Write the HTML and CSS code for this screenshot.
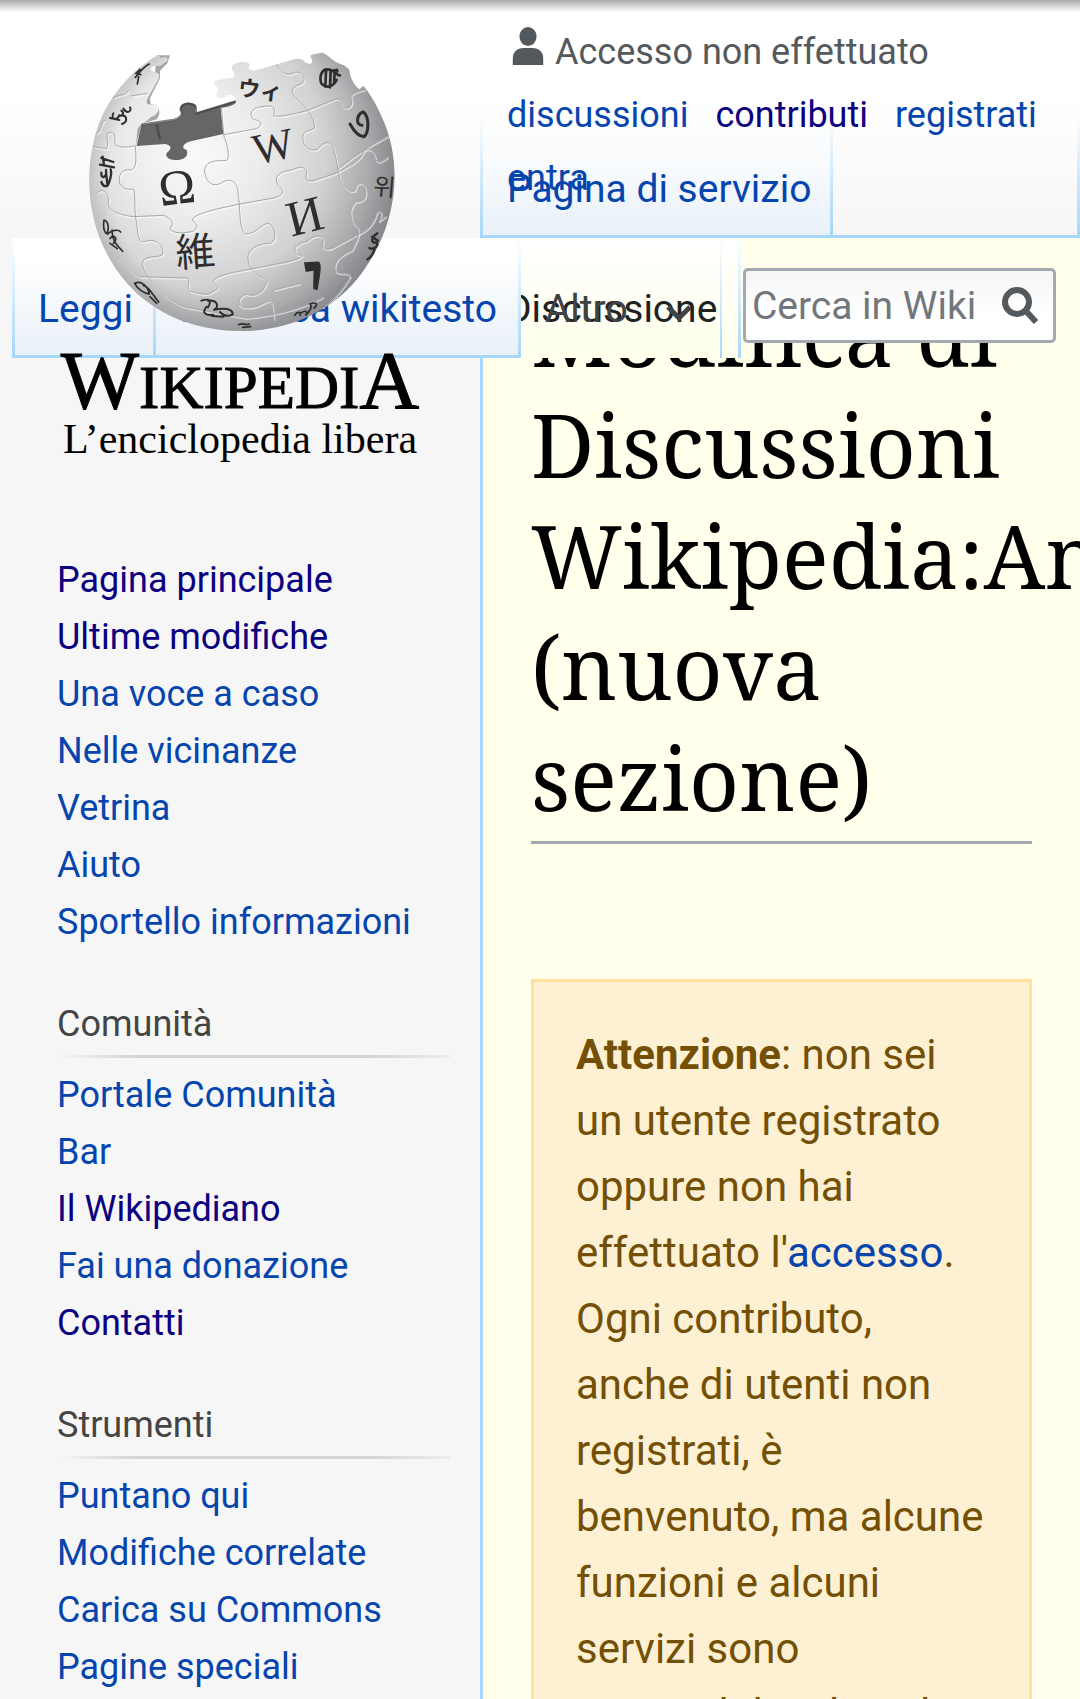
FILE: index.html
```html
<!DOCTYPE html>
<html lang="it">
<head>
<meta charset="utf-8">
<meta name="viewport" content="width=device-width, initial-scale=1">
<title>Modifica di Discussioni Wikipedia (nuova sezione)</title>
<link rel="stylesheet" href="styles.css">
</head>
<body>
<div class="page">
  <div class="band"></div>

  <main class="content">
    <h1 class="title">Modifica di Discussioni Wikipedia:Amministratori (nuova sezione)</h1>
    <div class="notice"><b>Attenzione</b>: non sei un utente registrato oppure non hai effettuato l'<a href="#">accesso</a>. Ogni contributo, anche di utenti non registrati, è benvenuto, ma alcune funzioni e alcuni servizi sono accessibili solo agli utenti registrati.</div>
  </main>

  <header class="head">
    <nav class="spaces" aria-label="Namespace">
      <a class="tab" href="#">Pagina di servizio</a>
    </nav>
    <ul class="personal">
      <li class="anon">
        <svg class="user" viewBox="0 0 32 40" aria-hidden="true"><ellipse cx="16" cy="10" rx="9" ry="10"/><path d="M0 40v-7c0-7 5-11 11-11h10c6 0 11 4 11 11v7z"/></svg>
        Accesso non effettuato
      </li>
      <li><a href="#">discussioni</a></li>
      <li><a class="visited" href="#">contributi</a></li>
      <li><a href="#">registrati</a></li>
      <li><a href="#">entra</a></li>
    </ul>
    <a class="selected" href="#">Discussione</a>
    <div class="tools">
      <nav class="views" aria-label="Visite">
        <a class="tab first" href="#">Leggi</a>
        <a class="tab" href="#">Modifica wikitesto</a>
      </nav>
      <button class="more" type="button">Altro
        <svg class="chevron" viewBox="0 0 26 16" aria-hidden="true"><path d="M2 2l11 11L24 2"/></svg>
      </button>
      <form class="search">
        <input class="field" type="search" placeholder="Cerca in Wiki" aria-label="Cerca in Wikipedia">
        <button class="go" type="submit" aria-label="Cerca">
          <svg class="lens" viewBox="0 0 36 37" aria-hidden="true"><circle cx="15" cy="15" r="12"/><path d="M23 23l11 12"/></svg>
        </button>
      </form>
    </div>
  </header>

  <aside class="side">
    <a class="logo" href="#" aria-label="Pagina principale">
      <svg class="globe" viewBox="0 0 1080 960" aria-hidden="true">
        <defs>
          <radialGradient id="ball" gradientUnits="userSpaceOnUse" cx="400" cy="370" r="660">
            <stop offset="0" stop-color="#fafafa"/><stop offset=".3" stop-color="#ececec"/>
            <stop offset=".6" stop-color="#d2d2d3"/><stop offset=".8" stop-color="#a9aaac"/><stop offset="1" stop-color="#77787b"/>
          </radialGradient>
          <radialGradient id="rim" gradientUnits="userSpaceOnUse" cx="545" cy="442" r="460">
            <stop offset=".86" stop-color="#8a8c90" stop-opacity="0"/><stop offset="1" stop-color="#85878a" stop-opacity=".3"/>
          </radialGradient>
          <path id="shape" d="M290 78C240 105 150 180 110 300C70 430 80 590 170 720C260 850 400 903 545 903C690 903 840 840 925 700C1010 570 1030 400 965 260C945 215 925 185 910 168L898 178C880 165 870 140 868 120C855 102 838 104 822 92C808 82 795 68 785 68C765 74 748 70 752 82C765 102 748 106 735 96C725 84 715 84 695 90L590 120C566 125 562 115 570 102C560 94 530 92 516 108C510 122 530 130 522 142L464 152C456 164 476 170 474 180C460 206 476 208 494 202C510 188 530 196 524 214L402 246C400 232 420 226 400 218C378 210 354 226 362 240C376 252 360 268 340 270L244 288L228 346L232 300C236 284 260 276 272 262C300 252 302 228 284 222C262 226 256 222 262 206L296 146C302 124 290 130 274 122C268 112 280 106 300 108L322 92C326 76 310 84 300 84C302 74 294 76 290 78Z"/>
          <clipPath id="clip"><use href="#shape"/></clipPath>
          <g id="seams">
            <path d="M100 350L140 356C150 330 130 312 150 306C172 308 162 330 166 344C180 356 210 350 230 347M226 350C228 380 232 412 214 420C184 414 172 440 180 462C196 486 216 474 222 480C228 500 220 540 230 580C234 620 236 640 256 634C290 622 312 650 308 672C300 684 264 676 250 690C240 716 264 744 320 800M112 488C124 472 144 486 146 508C138 536 160 552 220 560L310 556C336 566 344 578 330 594C332 612 376 610 398 604C416 592 414 586 396 570C400 552 470 536 540 522L640 504C672 496 674 484 656 468C636 440 660 424 696 420C716 408 740 408 740 430C734 450 742 454 760 452L826 430C870 406 900 392 910 366C924 346 944 364 946 388C952 402 966 394 984 380"/>
            <path d="M484 232L492 320C502 340 512 390 498 392C460 390 432 396 434 426C440 462 460 470 482 460C510 440 534 454 534 490C542 540 536 596 556 612C590 612 602 580 626 580C648 592 652 632 630 640C590 640 560 660 564 690C572 736 610 736 620 758C606 794 580 800 556 792C532 804 530 826 552 832C590 836 606 820 624 812C642 814 636 840 642 868"/>
            <path d="M490 314L590 296C612 284 600 270 580 268C564 248 580 232 606 230C640 222 650 236 640 256C650 264 700 252 740 242L830 206C846 210 840 224 856 234C874 234 880 214 872 200C874 186 900 184 914 178M650 104C662 128 684 140 706 126C732 126 742 150 722 162C694 170 690 184 704 200C734 230 764 260 764 294C748 304 728 300 728 324C730 352 748 364 772 358C790 334 812 330 820 352C830 390 834 420 840 450C858 484 880 490 886 478C888 456 912 452 916 478C922 504 908 516 890 514C866 530 870 560 880 580C908 600 896 620 876 660C830 680 820 700 826 724C850 740 862 720 870 740C850 776 830 800 790 834"/>
            <path d="M458 784C482 776 474 770 458 754C468 738 500 730 578 716L680 696C720 686 740 676 712 674C694 656 710 640 740 634C764 612 790 612 790 636C784 652 790 660 812 656L880 620C912 606 940 590 950 548C962 536 970 550 956 574L978 558M172 680C196 710 216 730 240 740L382 744C396 760 370 780 398 786C424 790 440 800 458 784M320 800C340 816 360 830 380 832L560 864C640 856 720 840 790 800M160 204C180 190 196 200 206 180M212 198L262 190M110 310C130 300 116 280 136 270M830 420C900 360 960 330 1000 310M640 780L720 760"/>
          </g>
        </defs>
        <path fill="#a4a8ac" d="M290 76L330 76L322 100L300 122L300 145L270 205L272 222C298 220 306 250 290 268L250 280L238 345L215 345L230 280L262 205L284 140Z"/>
        <use href="#shape" fill="url(#ball)"/>
        <use href="#shape" fill="url(#rim)"/>
        <path fill="#666" d="M244 286L340 272C362 268 374 254 360 238C360 220 384 214 402 222C416 232 398 244 408 248L528 212C532 218 520 228 482 234L490 312L392 334C366 342 364 356 380 360C388 382 366 392 342 390C318 388 312 372 326 364C338 350 328 344 314 342L230 348Z"/>
        <path fill="none" stroke="#3e3e3e" stroke-width="7" opacity=".65" d="M244 284L340 270C358 266 372 254 362 240C362 222 384 216 404 226C414 236 402 242 410 250L526 214M290 284L300 328"/>
        <g clip-path="url(#clip)" fill="none">
          <use href="#seams" x="3" y="4" stroke="#fff" stroke-width="4" stroke-opacity=".6"/>
          <use href="#seams" stroke="#a9a9ab" stroke-width="3"/>
        </g>
        <g class="glyphs">
          <text x="302" y="528" font-size="148" transform="rotate(-7 302 528)">Ω</text>
          <text x="588" y="404" font-size="130" transform="rotate(-12 588 404)">W</text>
          <text x="694" y="620" font-size="150" transform="rotate(-14 694 620)">И</text>
          <text x="350" y="712" font-size="118" transform="rotate(-4 350 712)">維</text>
          <text x="532" y="196" font-size="66" font-weight="700" transform="rotate(7 532 196)">ウィ</text>
          <text x="938" y="494" font-size="72" transform="rotate(5 938 494)">위</text>
        </g>
        <g class="scripts">
          <path stroke-width="7" fill="#2f2d2d" d="M736 700L774 698C782 700 778 724 776 740L770 776L763 774L764 718L740 722Z"/>
          <path stroke-width="9" d="M906 286C884 284 892 250 910 246C930 262 926 310 912 320C896 320 880 300 870 282"/>
          <path stroke-width="8" d="M784 160C776 136 788 118 800 118C826 118 832 140 840 136M786 162C800 176 820 170 830 150M798 122L796 170M812 122L810 172M824 128L822 160M812 120C824 128 830 112 832 124"/>
          <path stroke-width="5" d="M268 102C250 110 240 126 226 142M240 118L228 130L242 134M236 140L232 162"/>
          <path stroke-width="6" d="M150 264L178 270M160 250C150 270 172 272 178 256C188 262 194 248 184 242M186 282C204 276 202 256 184 256M190 236C204 256 216 240 210 232"/>
          <path stroke-width="7" d="M120 404L162 412M128 380L132 404M124 384L160 396M124 428C122 450 142 442 138 420M152 418C156 430 150 450 146 460C142 472 130 472 124 456M138 426L142 462"/>
          <path stroke-width="5" d="M132 570C150 576 146 606 138 610C126 596 132 574 132 570M142 612C162 596 178 600 182 606M156 600C156 632 168 642 188 664M150 626C160 610 176 624 160 640M150 640L172 656"/>
          <path stroke-width="6" d="M424 812C448 804 456 812 444 832M444 812C476 810 478 834 460 840C490 832 520 836 518 854C504 860 490 858 480 846M440 830C424 848 436 858 460 854M456 858L490 860"/>
          <path stroke-width="5" d="M224 760C244 750 264 770 268 792C250 790 232 776 224 760M250 766C268 770 282 800 296 816M270 800L290 820"/>
          <path stroke-width="7" d="M952 610C934 622 930 640 950 638C958 650 938 660 928 654M944 656C940 672 934 682 922 688M936 620L954 632"/>
          <path stroke-width="5" d="M704 856C712 842 724 846 720 856M724 848C740 838 744 848 736 856C750 844 758 830 750 822C770 814 776 824 762 834M536 884C548 876 556 888 568 882M548 892L572 890"/>
        </g>
      </svg>
      <span class="wordmark"><span class="cap">W</span>IKIPEDI<span class="cap">A</span></span>
      <span class="tagline">L’enciclopedia libera</span>
    </a>
    <nav class="portal" aria-label="Navigazione">
      <ul>
        <li><a class="visited" href="#">Pagina principale</a></li>
        <li><a class="visited" href="#">Ultime modifiche</a></li>
        <li><a href="#">Una voce a caso</a></li>
        <li><a href="#">Nelle vicinanze</a></li>
        <li><a href="#">Vetrina</a></li>
        <li><a href="#">Aiuto</a></li>
        <li><a href="#">Sportello informazioni</a></li>
      </ul>
    </nav>
    <nav class="portal">
      <h2>Comunità</h2>
      <ul>
        <li><a href="#">Portale Comunità</a></li>
        <li><a href="#">Bar</a></li>
        <li><a class="visited" href="#">Il Wikipediano</a></li>
        <li><a href="#">Fai una donazione</a></li>
        <li><a class="visited" href="#">Contatti</a></li>
      </ul>
    </nav>
    <nav class="portal">
      <h2>Strumenti</h2>
      <ul>
        <li><a href="#">Puntano qui</a></li>
        <li><a href="#">Modifiche correlate</a></li>
        <li><a href="#">Carica su Commons</a></li>
        <li><a href="#">Pagine speciali</a></li>
      </ul>
    </nav>
  </aside>
</div>
</body>
</html>
```
FILE: styles.css
```css
* { box-sizing: border-box; }

body {
  margin: 0;
  font: 36px/57px Roboto, sans-serif;
  color: #202122;
  background: #f6f6f6;
}

a { color: #0645ad; text-decoration: none; }
a.visited { color: #0b0080; }
ul { list-style: none; margin: 0; padding: 0; }
button, input { font: inherit; }

/* Header, sidebar and content share one grid so that they may overlap */
.page {
  display: grid;
  grid-template-columns: 480px minmax(0, 1fr);
  grid-template-rows: 238px auto;
  height: 100vh;
  overflow-x: hidden;
  overflow-y: auto;
  scrollbar-width: none;
}

.band {
  grid-area: 1 / 1 / 2 / 3;
  background:
    linear-gradient(#aaa, rgba(255, 255, 255, 0)) 0 0 / 100% 12px no-repeat,
    linear-gradient(#fff 40%, #f6f6f6);
}

/* Content */
.content {
  grid-area: 2 / 2;
  padding: 40px 48px;
  border-left: 3px solid #a7d7f9;
  background: #ffffec;
}

.title {
  margin: 0 0 135px;
  padding-bottom: 8px;
  border-bottom: 3px solid #a2a9b1;
  font: 400 87px/111px "Noto Serif", "DejaVu Serif", serif;
  color: #000;
}

.notice {
  padding: 40px 42px;
  border: 3px solid #fde29b;
  background: #fef0d2;
  color: #735005;
  font-size: 42px;
  line-height: 66px;
}

/* Header */
.head {
  grid-area: 1 / 1 / 3 / 3;
  z-index: 1;
  align-self: start;
  display: grid;
  grid-template-columns: 480px minmax(0, 1fr);
  grid-template-rows: 238px 120px;
}

.spaces {
  grid-area: 1 / 2;
  align-self: end;
  display: flex;
  height: 120px;
  border-bottom: 3px solid #a7d7f9;
  background:
    linear-gradient(rgba(167, 215, 249, 0), #a7d7f9) 0 0 / 3px 100% no-repeat,
    linear-gradient(rgba(167, 215, 249, 0), #a7d7f9) 100% 0 / 3px 100% no-repeat;
}

.tab {
  padding: 43px 24px 0;
  font-size: 39px;
  background:
    linear-gradient(#fff, #a7d7f9) 100% 0 / 3px 100% no-repeat,
    linear-gradient(#fff 20%, #e8f0f8);
}

.spaces .tab {
  margin-left: 3px;
  padding-right: 22px;
  background:
    linear-gradient(rgba(167, 215, 249, 0), #a7d7f9) 100% 0 / 3px 100% no-repeat,
    linear-gradient(rgba(255, 255, 255, 0), #fafcfe 35%, #e8f0f8);
}

.tab.first {
  padding-left: 26px;
  padding-right: 23px;
  background:
    linear-gradient(#fff, #a7d7f9) 0 0 / 3px 100% no-repeat,
    linear-gradient(#fff, #a7d7f9) 100% 0 / 3px 100% no-repeat,
    linear-gradient(#fff 20%, #e8f0f8);
}

.personal {
  grid-area: 1 / 2;
  align-self: start;
  z-index: 1;
  display: flex;
  flex-wrap: wrap;
  column-gap: 27px;
  padding: 21px 24px 0 27px;
  line-height: 63px;
}

.anon {
  display: flex;
  gap: 10px;
  padding-left: 4px;
  color: #54595d;
}

.user { width: 34px; height: 38px; margin-top: 6px; fill: #54595d; }

.selected {
  grid-area: 2 / 2;
  justify-self: start;
  width: 243px;
  padding: 43px 0 0 26px;
  color: #202122;
  font-size: 39px;
  background:
    linear-gradient(#fff, #a7d7f9) 100% 0 / 3px 100% no-repeat,
    linear-gradient(#fff, #ffffec);
}

.tools {
  grid-area: 2 / 1 / 3 / 3;
  display: flex;
  padding: 0 24px 0 12px;
}

.views { display: flex; border-bottom: 3px solid #a7d7f9; }

.more {
  display: flex;
  gap: 38px;
  width: 220px;
  padding: 43px 0 0 24px;
  border: 0;
  color: #404244;
  font-size: 39px;
  text-align: left;
  background:
    linear-gradient(#fff, #a7d7f9) 100% 0 / 3px 100% no-repeat,
    linear-gradient(#fff, #ffffec) 100% 0 / 19px 100% no-repeat;
}

.chevron { width: 26px; height: 16px; margin-top: 24px; fill: none; stroke: #404244; stroke-width: 5; }

.search {
  flex: 1;
  display: flex;
  align-items: center;
  min-width: 0;
  height: 75px;
  margin: 30px 0 0 2px;
  border: 3px solid #a2a9b1;
  border-radius: 5px;
  background: linear-gradient(#f5f5f5, #fff 60%);
}

.field {
  flex: 1;
  min-width: 0;
  padding: 1px 0 0 6px;
  border: 0;
  outline: 0;
  background: none;
  font-size: 39px;
}
.field::placeholder { color: #72777d; opacity: 1; }

.go { display: flex; padding: 0 15px 0 0; border: 0; background: none; }
.lens { width: 36px; height: 37px; fill: none; stroke: #54595d; stroke-width: 6; }

/* Sidebar */
.side { grid-area: 1 / 1 / 3 / 2; }

.logo {
  position: relative;
  z-index: 2;
  display: flex;
  flex-direction: column;
  align-items: center;
  height: 552px;
  padding-top: 30px;
  color: #000;
  font-family: "Liberation Serif", serif;
  white-space: nowrap;
}

.globe { flex: none; width: 360px; height: 320px; }
.glyphs { fill: #2f2d2d; font-family: "Liberation Serif", "Noto Sans CJK JP", "Noto Sans CJK KR", serif; }
.scripts { fill: none; stroke: #2f2d2d; stroke-linecap: round; }

.wordmark { font-size: 61px; line-height: 64px; -webkit-text-stroke: 1px #000; }
.cap { font-size: 83px; line-height: 60px; }
.tagline { font-size: 42px; line-height: 38px; }

.portal { margin-bottom: 45px; padding: 0 30px 0 57px; }

.portal h2 {
  margin: 0 0 9px;
  padding-bottom: 5px;
  color: #444;
  font-size: 36px;
  font-weight: 400;
  background: linear-gradient(90deg, rgba(204, 204, 204, 0), #d4d4d4 20%, #d4d4d4 80%, rgba(204, 204, 204, .2)) 0 100% / 100% 3px no-repeat;
}
```
